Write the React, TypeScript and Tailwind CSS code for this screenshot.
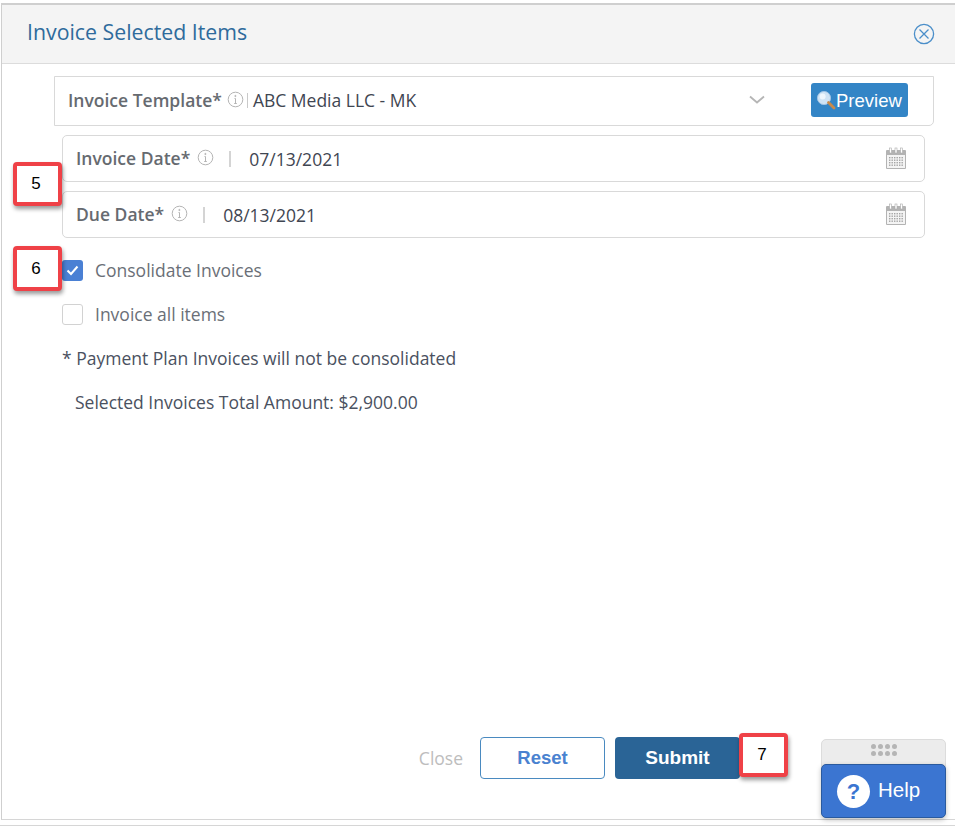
import React from "react";

const Info = () => (
  <svg width="17" height="17" viewBox="0 0 17 17" fill="none" stroke="#b4b4b4" strokeWidth="1">
    <circle cx="8.5" cy="8.5" r="7.3" />
    <path d="M8.5 7.5v5M7.2 12.5h2.6M7.5 7.5h1" />
    <circle cx="8.4" cy="5" r=".6" fill="#b4b4b4" />
  </svg>
);

const Calendar = () => (
  <svg width="22" height="23" viewBox="0 0 22 23" className="shrink-0">
    <rect x="1" y="3" width="20" height="19" rx="1" fill="#b3b3b3" />
    <rect x="2" y="8" width="18" height="13" fill="#f4f4f4" />
    <rect x="4.5" y="1" width="2" height="5" fill="#fff" stroke="#aaa" strokeWidth=".6" />
    <rect x="10" y="1" width="2" height="5" fill="#fff" stroke="#aaa" strokeWidth=".6" />
    <rect x="15.5" y="1" width="2" height="5" fill="#fff" stroke="#aaa" strokeWidth=".6" />
    <g fill="#a3a3a3">
      {[10, 12.5, 15, 17.5].map((y) =>
        [4, 6.5, 9, 11.5, 14, 16.5].map((x) => <rect key={`${x}-${y}`} x={x} y={y} width="1.4" height="1.4" />)
      )}
    </g>
  </svg>
);

const Callout = ({ n, className }: { n: string; className: string }) => (
  <div
    className={`absolute flex items-center justify-center pr-[3px] bg-white border-[4px] border-[#ef4147] rounded-[4px] shadow-[1px_3px_4px_rgba(0,0,0,0.4)] font-['Liberation_Sans',sans-serif] text-[17px] text-black ${className}`}
  >
    {n}
  </div>
);

const DateRow = ({ label, value }: { label: string; value: string }) => (
  <div className="flex items-center h-[47px] border border-[#d9d9d9] rounded-[5px] pl-[13px] pr-[17px] text-[17.5px] leading-[24px]">
    <span className="font-semibold text-[#666a70] -mt-[1px]">{label}</span>
    <span className="ml-[7px] -mt-[3px]"><Info /></span>
    <span className="w-[2px] h-[16px] bg-[#d4d4d4] ml-[15px] mr-[18px]" />
    <span className="text-[#3f4652]">{value}</span>
    <span className="ml-auto"><Calendar /></span>
  </div>
);

export default function App() {
  return (
    <div className="relative w-[955px] h-[827px] overflow-hidden bg-white font-['Open_Sans',sans-serif]">
      <div className="ml-[1px] mt-[3px] h-[817px] border-t-2 border-l border-b border-[#cfcfcf] border-b-[#d6d6d6] flex flex-col">
        <header className="flex items-center justify-between h-[59px] bg-[#f4f4f4] border-b border-[#dcdcdc] pl-[25px] pr-[20px] shrink-0">
          <h1 className="text-[21.3px] leading-[28px] -mt-[4px] text-[#2f6b9c]">Invoice Selected Items</h1>
          <svg width="22" height="22" viewBox="0 0 22 22" fill="none" stroke="#4a8ec9" strokeWidth="1.3" className="-mt-[1px]">
            <circle cx="11" cy="11" r="9.6" />
            <path d="M6.5 6.5l9 9M15.5 6.5l-9 9" />
          </svg>
        </header>

        <main className="flex-1 flex flex-col pl-[52px] pr-[21px] pt-[12px]">
          <div className="flex items-center h-[50px] border border-[#d9d9d9] rounded-br-[5px] pl-[13px] pr-[25px] text-[17.5px] leading-[24px]">
            <span className="font-semibold text-[#666a70] -mt-[2px]">Invoice Template*</span>
            <span className="ml-[5px] -mt-[4px]"><Info /></span>
            <span className="w-px h-[15px] bg-[#c9c9c9] ml-[3px] mr-[5px] -mt-[2px]" />
            <span className="text-[#3f4652] -mt-[2px]">ABC Media LLC - MK</span>
            <svg width="18" height="10" viewBox="0 0 18 10" fill="none" stroke="#b5b5b5" strokeWidth="1.8" className="ml-auto mr-[45px] -mt-[2px]">
              <path d="M2 1.5l7 6 7-6" />
            </svg>
            <button className="flex items-center h-[34px] w-[97px] -mt-[2px] bg-[#3385c6] rounded-[3px] pl-[5px] text-white text-[18.5px] font-['Liberation_Sans',sans-serif]">
              <svg width="20" height="20" viewBox="0 0 20 20" className="shrink-0">
                <circle cx="8" cy="8" r="6.6" fill="#cfe3f5" stroke="#9fc3e4" />
                <circle cx="6.6" cy="6.4" r="3" fill="#eef6fd" />
                <path d="M12.5 12.5L18 18" stroke="#c98a4a" strokeWidth="2.8" strokeLinecap="round" />
              </svg>
              <span className="mt-[1px]">Preview</span>
            </button>
          </div>

          <div className="ml-[8px] mr-[9px] mt-[9px] flex flex-col gap-[9px]">
            <DateRow label="Invoice Date*" value="07/13/2021" />
            <DateRow label="Due Date*" value="08/13/2021" />
          </div>

          <div className="ml-[8px] text-[17.5px] text-[#6a6f77]">
            <label className="flex items-center h-[22px] mt-[21px] gap-[12px]">
              <span className="flex items-center justify-center w-[21px] h-[21px] rounded-[3px] bg-[#4a80d4]">
                <svg width="13" height="11" viewBox="0 0 13 11" fill="none" stroke="#fff" strokeWidth="2">
                  <path d="M1.5 5.5l3.5 3.5 6.5-7.5" />
                </svg>
              </span>
              Consolidate Invoices
            </label>
            <label className="flex items-center h-[22px] mt-[22px] gap-[12px]">
              <span className="w-[21px] h-[21px] rounded-[3px] bg-white border border-[#d2d2d2]" />
              Invoice all items
            </label>
            <p className="mt-[22px] h-[22px] leading-[22px] text-[#4a5160]">* Payment Plan Invoices will not be consolidated</p>
            <p className="mt-[22px] h-[22px] leading-[22px] ml-[13px] text-[#4a5160]">Selected Invoices Total Amount: $2,900.00</p>
          </div>
        </main>

        <footer className="flex items-center justify-end h-[42px] mb-[40px] pr-[215px] shrink-0">
          <span className="text-[17.5px] text-[#bdbdbd] mr-[17px]">Close</span>
          <button className="w-[125px] h-[42px] border border-[#4a8ac0] rounded-[4px] bg-white text-[#4a82d0] font-bold text-[18.5px] font-['Liberation_Sans',sans-serif] mr-[10px]">Reset</button>
          <button className="w-[125px] h-[42px] rounded-[4px] bg-[#2a6496] text-white font-bold text-[19px] font-['Liberation_Sans',sans-serif]">Submit</button>
        </footer>
      </div>

      <div className="absolute left-0 right-0 top-[825px] h-px bg-[#d6d6d6]" />

      <Callout n="5" className="left-[13px] top-[162px] w-[49px] h-[44px]" />
      <Callout n="6" className="left-[13px] top-[246px] w-[49px] h-[45px]" />
      <Callout n="7" className="left-[739px] top-[733px] w-[49px] h-[44px]" />

      <div className="absolute left-[821px] top-[739px] w-[125px] h-[28px] bg-[#ececec] border border-[#dcdcdc] rounded-t-[5px] flex justify-center pt-[4px]">
        <div className="grid grid-cols-4 gap-x-[2px] gap-y-[2px] h-fit">
          {Array.from({ length: 8 }).map((_, i) => (
            <span key={i} className="w-[5px] h-[5px] rounded-full bg-[#b5b5b5]" />
          ))}
        </div>
      </div>
      <div className="absolute left-[821px] top-[764px] w-[125px] h-[54px] bg-[#3b75d1] border border-[#2a5a9e] rounded-[5px] shadow-[0_2px_5px_rgba(0,0,0,0.25)] flex items-center pl-[15px] gap-[8px] text-white text-[20.5px] font-['Liberation_Sans',sans-serif]">
        <span className="flex items-center justify-center w-[33px] h-[33px] rounded-full bg-white text-[#3b75d1] font-bold text-[22px]">?</span>
        <span className="-mt-[2px]">Help</span>
      </div>
    </div>
  );
}
